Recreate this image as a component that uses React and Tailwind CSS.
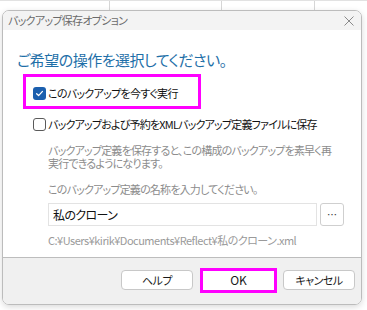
import React from 'react';

const jp = "font-['Noto_Sans_CJK_JP',sans-serif] [font-feature-settings:'palt']";

function Check({ checked }) {
  return checked ? (
    <span className="w-[13px] h-[13px] rounded-[3px] bg-[#1b5fae] flex items-center justify-center shrink-0">
      <svg width="9" height="9" viewBox="0 0 10 10" fill="none">
        <path d="M1.8 5.2 L4 7.3 L8.3 2.7" stroke="white" strokeWidth="1.4" strokeLinecap="round" strokeLinejoin="round" />
      </svg>
    </span>
  ) : (
    <span className="w-[13px] h-[13px] rounded-[3px] border border-[#5a5a5a] bg-white shrink-0" />
  );
}

function Btn({ children }) {
  return (
    <button className="w-[72px] h-[20px] bg-white border border-[#c8c8c8] rounded-[4px] text-[11px] tracking-[-0.5px] leading-none text-[#1a1a1a] flex items-center justify-center">
      {children}
    </button>
  );
}

export default function App() {
  return (
    <div className={`w-[367px] h-[310px] bg-white overflow-hidden flex flex-col ${jp}`}>
      {/* what lies behind the dialog */}
      <div className="h-[10px] flex border-t border-[#e2e2e2]">
        <div className="w-[110px] border-r border-[#d6d6d6]" />
        <div className="w-[112px] border-r border-[#d6d6d6]" />
        <div className="w-[93px] border-r border-[#d6d6d6]" />
      </div>
      <div className="flex-1 pl-[2px] pr-[5px] pb-[5px] flex">
        <div className="w-[360px] h-[295px] border border-[#bcbcbc] rounded-[7px] overflow-hidden flex flex-col shadow-[0_2px_6px_rgba(0,0,0,0.15)]">
          {/* title bar */}
          <div className="h-[19px] bg-[#f3f3f3] flex items-center justify-between pl-[5px] pr-[7px]">
            <span className="text-[11px] leading-none text-[#6b6b6b] tracking-[-0.7px]">バックアップ保存オプション</span>
            <svg width="10" height="10" viewBox="0 0 10 10" className="mt-[1px]">
              <path d="M0.5 0.5 L9.5 9.5 M9.5 0.5 L0.5 9.5" stroke="#8a8a8a" strokeWidth="1" />
            </svg>
          </div>
          {/* body */}
          <div className="h-[228px] bg-white flex flex-col pl-[14px] border-b border-[#bdbdbd]">
            <div className="mt-[20px] h-[20px] flex items-center text-[15px] tracking-[-0.5px] text-[#1e6fa8] whitespace-nowrap">
              ご希望の操作を選択してください。
            </div>
            <div className="mt-[4px] ml-[6px] w-[178px] h-[35px] border-[3px] border-[#ff00ff] flex items-center pl-[7px] pt-[3px] gap-[2px]">
              <Check checked />
              <span className="text-[11px] tracking-[-0.7px] leading-none text-[#111] whitespace-nowrap">このバックアップを今すぐ実行</span>
            </div>
            <div className="mt-[7px] ml-[16px] h-[16px] flex items-center gap-[2px]">
              <Check />
              <span className="text-[11px] tracking-[-0.8px] leading-none text-[#111] whitespace-nowrap">バックアップおよび予約をXMLバックアップ定義ファイルに保存</span>
            </div>
            <div className="ml-[31px] flex flex-col">
              <p className="mt-[12px] text-[11px] tracking-[-0.8px] leading-[13px] text-[#8c8c8c] whitespace-nowrap">
                バックアップ定義を保存すると、この構成のバックアップを素早く再
                <br />
                実行できるようになります。
              </p>
              <p className="mt-[13px] text-[11px] tracking-[-0.8px] leading-[12px] text-[#8c8c8c] whitespace-nowrap">
                このバックアップ定義の名称を入力してください。
              </p>
              <div className="mt-[8px] flex gap-[3px]">
                <div className="w-[269px] h-[23px] border border-[#e3e3e3] flex items-center pl-[4px] text-[12px] tracking-[-0.6px] text-[#111]">
                  私のクローン
                </div>
                <button className="w-[24px] h-[23px] border border-[#cfcfcf] rounded-[3px] bg-white flex items-end justify-center pb-[5px] text-[10px] leading-none text-[#333]">
                  …
                </button>
              </div>
              <p className="mt-[8px] text-[11px] tracking-[-0.5px] leading-[12px] text-[#9a9a9a] whitespace-nowrap">
                C:¥Users¥kirik¥Documents¥Reflect¥私のクローン.xml
              </p>
            </div>
          </div>
          {/* footer */}
          <div className="flex-1 bg-[#f0f0f0] flex items-center justify-end pr-[6px] pb-[2px] gap-[6px]">
            <Btn>ヘルプ</Btn>
            <div className="border-[3px] border-[#ff00ff] ml-[1px]">
              <button className="w-[71px] h-[19px] bg-white text-[12px] leading-none text-[#1a1a1a] flex items-center justify-center">OK</button>
            </div>
            <Btn>キャンセル</Btn>
          </div>
        </div>
      </div>
    </div>
  );
}
